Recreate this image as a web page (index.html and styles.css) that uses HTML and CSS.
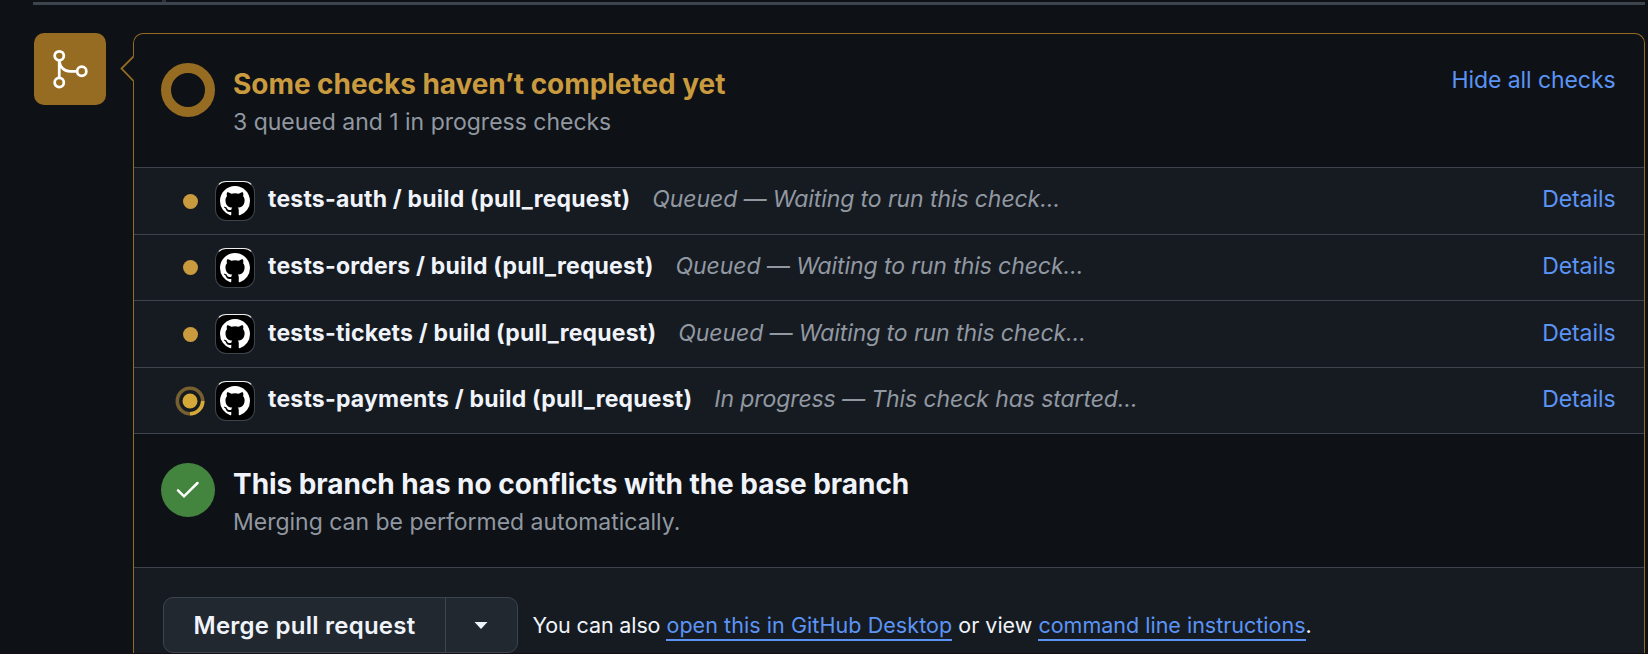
FILE: index.html
```html
<!DOCTYPE html>
<html lang="en">
<head>
<meta charset="utf-8">
<title>Merge pull request</title>
<link rel="stylesheet" href="styles.css">
</head>
<body>
<svg class="sprite" aria-hidden="true">
  <symbol id="octocat" viewBox="0 0 16 16"><path d="M8 0c4.42 0 8 3.58 8 8a8.013 8.013 0 0 1-5.45 7.59c-.4.08-.55-.17-.55-.38 0-.27.01-1.13.01-2.2 0-.75-.25-1.23-.54-1.48 1.78-.2 3.65-.88 3.65-3.95 0-.88-.31-1.59-.82-2.15.08-.2.36-1.02-.08-2.12 0 0-.67-.22-2.2.82-.64-.18-1.32-.27-2-.27-.68 0-1.36.09-2 .27-1.53-1.03-2.2-.82-2.2-.82-.44 1.1-.16 1.92-.08 2.12-.51.56-.82 1.28-.82 2.15 0 3.06 1.86 3.75 3.64 3.95-.23.2-.44.55-.51 1.07-.46.21-1.61.55-2.33-.66-.15-.24-.6-.83-1.23-.82-.67.01-.27.38.01.53.34.19.73.9.82 1.13.16.45.68 1.31 2.69.94 0 .67.01 1.3.01 1.49 0 .21-.15.45-.55.38A7.995 7.995 0 0 1 0 8c0-4.42 3.58-8 8-8Z"/></symbol>
</svg>
<div class="stub"></div>
<div class="topline"></div>
<main class="timeline">
  <div class="badge">
    <svg width="40" height="40" viewBox="-.3 -.1 24 24" fill="none" stroke="#fff" stroke-width="1.650"><circle cx="5.25" cy="4" r="2.75"/><circle cx="5.25" cy="20" r="2.75"/><circle cx="18.75" cy="13.25" r="2.75"/><path d="M5.250 6.750v10.500M5.250 7.250c.4 3.500 3 6 6.500 6H16"/></svg>
  </div>
  <section class="panel">
    <svg class="pointer" width="14" height="26" viewBox="0 0 14 26"><path d="M14 0L1.500 12.500L14 25.500Z" fill="#0e1116"/><path d="M13.500 .5L1.500 12.500L13.500 25" fill="none" stroke="#966c22" stroke-width="1.800"/></svg>
    <header class="status">
      <div class="ring"></div>
      <div class="copy"><h2 class="title pending">Some checks haven’t completed yet</h2><p class="sub">3 queued and 1 in progress checks</p></div>
      <a class="link">Hide all checks</a>
    </header>
    <ul class="checks">
      <li class="check"><span class="state"><i class="dot"></i></span><span class="avatar"><svg width="30" height="30"><use href="#octocat"/></svg></span><strong class="name">tests-auth / build (pull_request)</strong><em class="note">Queued — Waiting to run this check…</em><a class="link details">Details</a></li>
      <li class="check"><span class="state"><i class="dot"></i></span><span class="avatar"><svg width="30" height="30"><use href="#octocat"/></svg></span><strong class="name">tests-orders / build (pull_request)</strong><em class="note">Queued — Waiting to run this check…</em><a class="link details">Details</a></li>
      <li class="check"><span class="state"><i class="dot"></i></span><span class="avatar"><svg width="30" height="30"><use href="#octocat"/></svg></span><strong class="name">tests-tickets / build (pull_request)</strong><em class="note">Queued — Waiting to run this check…</em><a class="link details">Details</a></li>
      <li class="check"><span class="state"><svg width="30" height="30" viewBox="0 0 30 30"><circle cx="15" cy="15" r="12.700" fill="none" stroke="#776030" stroke-width="3.600"/><path d="M27.700 15A12.700 12.700 0 0 1 15 27.700" fill="none" stroke="#d4a937" stroke-width="3.600"/><circle cx="15" cy="15" r="7.500" fill="#d4a937"/></svg></span><span class="avatar"><svg width="30" height="30"><use href="#octocat"/></svg></span><strong class="name">tests-payments / build (pull_request)</strong><em class="note">In progress — This check has started…</em><a class="link details">Details</a></li>
    </ul>
    <div class="status conflicts">
      <div class="success"><svg width="24" height="18" viewBox="0 0 24 18"><path d="M2 9.300l6 6L21.500 2" fill="none" stroke="#fff" stroke-width="2.500" stroke-linecap="round"/></svg></div>
      <div class="copy"><h2 class="title">This branch has no conflicts with the base branch</h2><p class="sub">Merging can be performed automatically.</p></div>
    </div>
    <footer class="actions">
      <div class="button-group"><button class="merge">Merge pull request</button><button class="caret" aria-label="Merge options"><svg width="14" height="7" viewBox="0 0 14 7"><path d="M.5 0h13L7 7Z" fill="#f0f4fa"/></svg></button></div>
      <p class="hint"><span class="lead">You can also</span> <a class="underlined desktop">open this in GitHub Desktop</a> or view <a class="underlined">command line instructions</a>.</p>
    </footer>
  </section>
</main>
</body>
</html>
```
FILE: styles.css
```css
* { box-sizing: border-box; }
body { margin: 0; height: 654px; overflow: hidden; background: #0e1116; border-bottom: 1px solid #170d18; font-family: Inter, "Liberation Sans", sans-serif; font-size: 23px; line-height: 34px; color: #f0f4fa; }
h2, p, ul { margin: 0; padding: 0; }
.sprite { display: none; }
.stub { width: 4px; height: 2px; margin-left: 162px; background: #2d333b; }
.topline { height: 3px; margin: 0 3px 0 33px; background: #3d444d; }
.timeline { display: flex; align-items: flex-start; gap: 27px; padding: 28px 3px 0 34px; }
.badge { width: 72px; height: 72px; flex: none; border-radius: 10px; background: #966c22; display: flex; align-items: center; justify-content: center; }
.badge svg { overflow: visible; }
.panel { position: relative; flex: 1; height: 620px; border: 1px solid #966c22; border-bottom: 0; border-radius: 10px 10px 0 0; }
.pointer { position: absolute; left: -14px; top: 22px; }
.status { display: flex; height: 133px; padding: 29px 28.5px 0 27px; }
.ring { flex: none; width: 54px; height: 54px; border: 10.5px solid #966c22; border-radius: 50%; }
.copy { flex: 1; margin-left: 18px; padding-top: 1px; white-space: nowrap; }
.title { font-size: 28px; font-weight: 700; line-height: 40px; letter-spacing: -0.05px; }
.pending { color: #c99a3e; }
.sub { color: #9198a1; line-height: 36px; letter-spacing: -0.01px; }
.link { color: #5b94f5; letter-spacing: -0.08px; }
.checks { list-style: none; background: #161b22; }
.check { display: flex; height: 67px; border-top: 1px solid #3d444d; padding: 0 28.5px 0 41px; line-height: 62px; white-space: nowrap; }
.check:nth-child(even) { height: 66px; }
.check:nth-child(3) { line-height: 64px; }
.state { width: 30px; display: flex; align-items: center; justify-content: center; }
.dot { width: 15px; height: 15px; border-radius: 50%; background: #c99a3e; }
.avatar { width: 40px; height: 40px; margin: 13px 13px 0 10px; border: 1px solid #3d444d; border-top-color: #eee; border-radius: 11px; background: #000; display: flex; align-items: center; justify-content: center; }
.avatar svg { fill: #fff; }
.name { font-weight: 700; letter-spacing: 0.2px; }
.note { margin-left: 22px; color: #9198a1; letter-spacing: -0.09px; }
.details { margin-left: auto; }
.conflicts { border-top: 1px solid #3d444d; height: 134px; }
.success { flex: none; width: 54px; height: 54px; border-radius: 50%; background: #43853f; display: flex; align-items: center; justify-content: center; }
.actions { display: flex; height: 86px; padding: 29px 29px 0; background: #161b22; border-top: 1px solid #3d444d; }
.button-group { display: flex; width: 355px; height: 56px; border: 1px solid #3d444d; border-radius: 10px; background: #212830; }
.button-group button { font: inherit; color: inherit; border: 0; padding: 0; background: none; }
.button-group .merge { width: 281px; padding-top: 2px; font-size: 24px; font-weight: 600; letter-spacing: 0.24px; }
.button-group .caret { flex: 1; padding-right: 2px; border-left: 1px solid #3d444d; display: flex; align-items: center; justify-content: center; }
.hint { margin-left: 14.5px; line-height: 56px; font-size: 21.5px; white-space: nowrap; }
.lead { letter-spacing: -0.13px; }
.desktop { letter-spacing: 0.07px; }
.underlined { color: #5b94f5; border-bottom: 2px solid; padding-bottom: 1px; }
```
